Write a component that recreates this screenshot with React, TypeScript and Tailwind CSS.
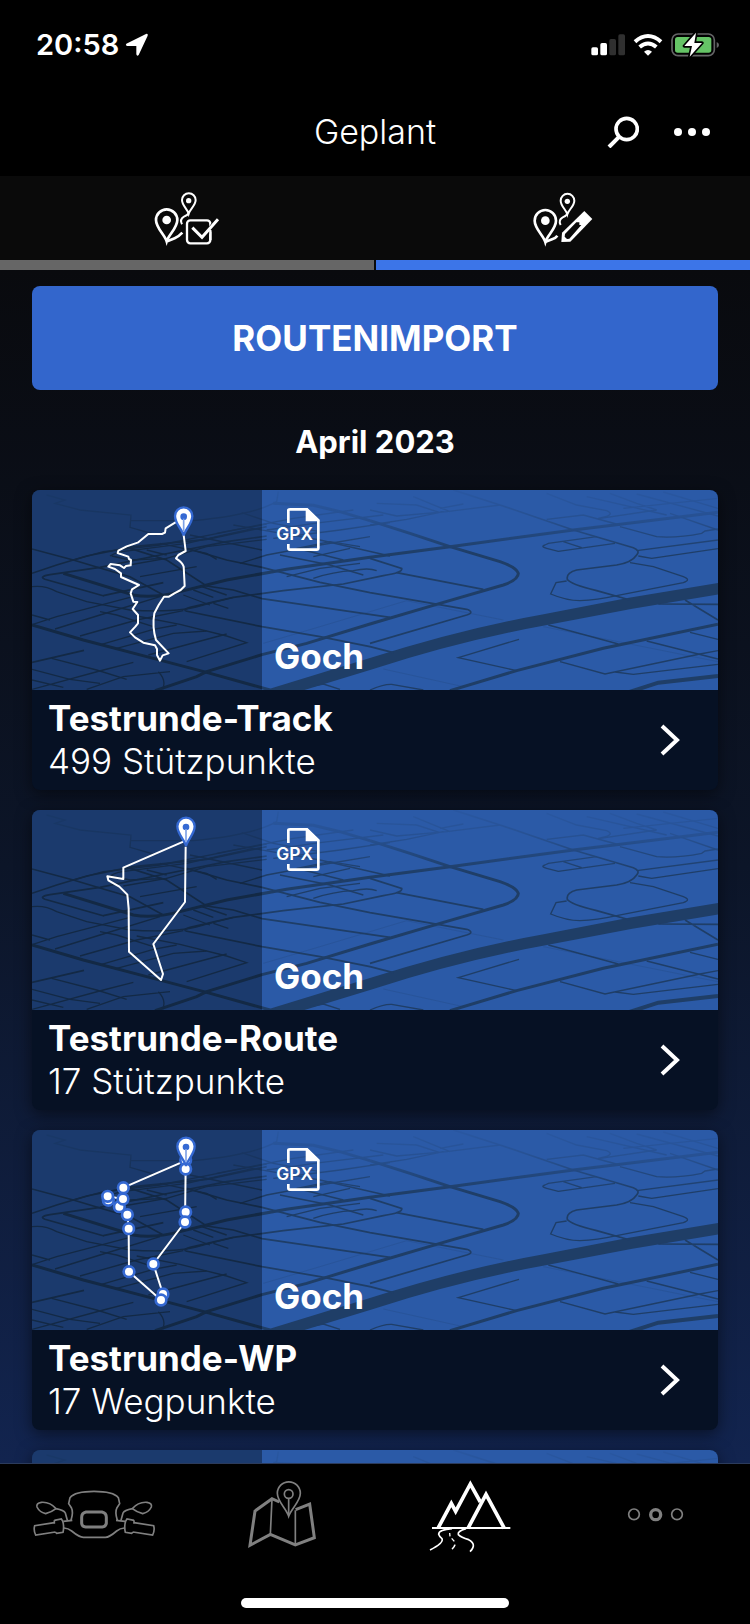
import React from "react";

const routes = [
  { kind: "track", place: "Goch", name: "Testrunde-Track", points: "499 Stützpunkte" },
  { kind: "route", place: "Goch", name: "Testrunde-Route", points: "17 Stützpunkte" },
  { kind: "waypoints", place: "Goch", name: "Testrunde-WP", points: "17 Wegpunkte" },
  { kind: "none", place: "", name: "", points: "" },
];

const trackPath =
  "M470 125 L437 145 L435 158 L426 162 L385 162 L355 187 L320 199 L295 212 L293 219 L325 230 L327 237 L333 240 L332 256 L318 258 L312 264 L300 256 L272 252 L265 260 L285 267 L303 280 L303 291 L357 315 L336 328 L332 340 L340 365 L352 366 L338 387 L354 405 L354 430 L346 440 L330 457 L345 472 L370 488 L405 496 L411 507 L411 525 L420 542 L428 526 L446 520 L408 480 Q396 440 403 400 L416 375 L432 350 L447 350 L463 340 L482 330 L494 318 L491 260 Q487 247 468 235 L475 225 L497 213 L491 165";

const routePath =
  "M490 125 L310 203 L310 237 L262 229 L265 241 L298 260 L322 284 L326 326 L327 455 L423 540 L429 522 L400 432 L495 306 L497 140";

const waypoints = [
  [497, 120], [497, 147], [310, 203], [265, 241], [263, 229], [298, 260], [309, 237], [322, 284],
  [326, 326], [327, 455], [429, 522], [423, 540], [400, 432], [497, 276], [495, 306],
];

function Pin({ x, y }: { x: number; y: number }) {
  return (
    <g transform={`translate(${x} ${y})`}>
      <path d="M0 57 C-3 40 -26 22 -26 -2 A26 26 0 0 1 26 -2 C26 22 3 40 0 57Z" fill="#fff" stroke="#3569d3" strokeWidth="7" />
      <circle r="10" fill="#3569d3" />
      <path d="M0 6V45" stroke="#7fa2e6" strokeWidth="5" />
    </g>
  );
}

function MapDrawing({ kind }: { kind: string }) {
  return (
    <svg className="absolute inset-0 h-full w-full" viewBox="36 30 2058 600" preserveAspectRatio="xMinYMin slice" aria-hidden="true">
      <defs>
        <linearGradient id={`fade-${kind}`} x1="0" y1="30" x2="0" y2="220" gradientUnits="userSpaceOnUse">
          <stop offset="0" stopColor="#fff" stopOpacity="0.08" />
          <stop offset="0.4" stopColor="#fff" stopOpacity="0.3" />
          <stop offset="1" stopColor="#fff" />
        </linearGradient>
        <mask id={`mask-${kind}`} maskUnits="userSpaceOnUse" x="0" y="0" width="2200" height="700">
          <rect width="2200" height="700" fill={`url(#fade-${kind})`} />
        </mask>
      </defs>
      <rect x="36" y="30" width="2058" height="600" fill="#2b5aa7" />
      <g mask={`url(#mask-${kind})`} fill="none" stroke="#1f3e67">
        {/* main roads */}
        <g strokeWidth="9">
          <path d="M36 435 L190 480 L400 535 L560 577 L750 630" />
          <path d="M405 632 L530 590 L560 575 L726 524 L860 490 L1050 432 L1260 370 L1450 315 Q1495 300 1495 280 Q1490 262 1440 245 L1290 200 L1170 160 L1050 122" />
          <path d="M130 280 L340 345 Q400 356 480 335 L620 300 L800 268 L1050 232 L1290 200 L1660 150 L2094 97" />
          <path d="M1050 122 L960 95 L880 76 L760 70" />
          <path d="M1290 632 L1490 572 L1750 505 L2094 433" />
        </g>
        <path strokeWidth="34" d="M730 650 L1050 552 Q1320 465 1570 420 L1830 370 L2100 325" />
        <path strokeWidth="12" d="M1825 637 L1915 608 L2094 588" />
        {/* side roads */}
        <g strokeWidth="5">
          <path d="M36 207 L160 240 L260 270 L330 290 L430 345" />
          <path d="M252 348 L75 298 Q55 290 90 284 L240 262 L420 225 L620 185 L740 168" />
          <path d="M36 280 L110 255 L200 228 L340 200 L560 178 L740 140" />
          <path d="M250 347 L430 308" />
          <path d="M330 205 L440 240 L560 318 L640 330 L726 356 L1110 412" />
          <path d="M500 205 L620 240 L726 262 L900 307 L1050 338 L1340 388 Q1365 397 1340 405 L1050 490" />
          <path d="M497 393 Q490 388 510 382 L640 352 L790 332 L970 312 L1090 287 Q1150 278 1145 265 L1050 235" />
          <path d="M497 393 L726 440 L900 470 L1050 500 L1120 518" />
          <path d="M1130 278 L1390 328" />
          <path d="M1300 30 L1440 75 L1660 150 L1840 203 Q1862 212 1850 225 Q1835 248 1790 255 L1670 270 Q1638 278 1642 298 Q1650 312 1730 332 L1830 360" />
          <path d="M1915 372 L2094 373 M1995 360 L2094 420" />
          <path d="M36 547 L192 511" />
        </g>
        {/* small streets */}
        <g strokeWidth="4">
          <path d="M80 45 L135 60 L105 70 L180 90 L333 105 L330 142 L410 165 M333 122 L520 122 Q700 105 770 65 L775 35" />
          <path d="M160 240 L250 215 L420 195 L620 155 L740 132" />
          <path d="M36 320 Q75 315 110 335 L200 365 L330 390 Q480 400 560 372 L640 352" />
          <path d="M36 405 L90 420 M36 434 L110 410 L330 352 M105 447 L240 405 L420 350 M180 468 L350 420 L490 392" />
          <path d="M240 395 L290 405 L400 440" />
          <path d="M245 493 L400 448 L470 435 M290 505 L460 460 L560 453 M385 525 L620 462" />
          <path d="M350 408 L480 433 L620 468 L680 488 L500 545" />
          <path d="M36 568 L150 598 L240 610 M95 535 L230 570 L320 598" />
          <path d="M36 628 L250 570 L340 547 M200 628 L310 590 L450 575 M415 575 Q440 600 428 628 M36 600 L130 622" />
          <path d="M270 228 Q290 215 330 212 L500 190 L700 145 M275 228 L330 240 L440 235 L560 200 L740 178" />
          <path d="M310 258 L440 235 M360 290 L530 260 M380 210 L440 225" />
          <path d="M420 190 L560 220 L590 238 M510 165 L726 210" />
          <path d="M640 135 L900 180 L1110 228 M665 98 L760 130 L900 155" />
          <path d="M540 318 L620 345 M520 330 L580 352 M490 345 L570 375 M580 370 L625 385" />
          <path d="M660 250 L740 225 L900 195 L1050 170 M590 160 L820 115 L1000 90" />
          <path d="M740 150 L900 128 L1090 105 M760 175 L960 150 L1110 128" />
          <path d="M780 225 L930 255 L1030 285 M850 210 L970 240" />
          <path d="M880 295 Q940 275 1000 272 Q1045 262 1070 272 M800 290 L900 265 L1020 250" />
          <path d="M830 205 L930 185 L1020 200 M880 230 L990 205" />
          <path d="M870 620 L910 612 L960 628 M1050 630 Q1090 612 1115 613 L1210 630" />
          <path d="M1050 90 L1130 108 L1280 95 L1440 75 M1180 50 L1290 95 M1070 70 L1190 75 L1260 98 M1260 85 L1330 72 M1050 135 L1160 118 L1270 95" />
          <path d="M1575 195 L1585 190 L1730 170 M1575 195 Q1560 200 1580 205 L1615 214 L1785 190 M1630 185 L1685 203" />
          <path d="M1640 303 L1608 308 L1592 342 Q1640 362 1680 362 Q1730 360 1790 347 L1990 308 Q2015 300 1990 290 L1900 260 L1830 248" />
          <path d="M1850 212 L2094 180 M1855 228 L1895 235 L2094 206 M1800 140 L1910 170 Q1970 175 2045 160 L2055 153 L2094 147" />
          <path d="M1580 118 L1690 105 L1800 135 M1735 115 Q1790 105 1760 92 L1670 75 L1580 40 M1740 115 L1910 90 L1850 70 L1770 40 M1810 85 L2094 55" />
          <path d="M1850 42 L2094 108 M1930 36 L2094 85 M1950 100 L2094 150 M1700 50 L1940 105" />
          <path d="M1585 435 L1795 492 M1880 483 L2094 537 M2010 457 L2094 478" />
          <path d="M1497 478 L1315 533 L1490 572 M1620 545 L1755 582 L2040 522 L2094 512 M1785 576 L1840 583 L2094 553" />
        </g>
        <path strokeWidth="1" strokeOpacity="0.6" d="M730 490 L900 440 L1160 362 L1450 420 M1090 567 L1330 620 M1570 440 L2094 545" />
      </g>
      <rect x="36" y="30" width="690" height="600" fill="#00050c" fillOpacity="0.37" />
      {kind === "track" && (
        <>
          <path d={trackPath} fill="none" stroke="#fff" strokeWidth="6" strokeLinejoin="round" />
          <Pin x={491} y={110} />
        </>
      )}
      {(kind === "route" || kind === "waypoints") && (
        <path d={routePath} fill="none" stroke="#fff" strokeWidth="6" strokeLinejoin="round" />
      )}
      {kind === "waypoints" &&
        waypoints.map(([x, y]) => (
          <circle key={`${x}-${y}`} cx={x} cy={y} r="16" fill="#fff" stroke="#3569d3" strokeWidth="8" />
        ))}
      {(kind === "route" || kind === "waypoints") && <Pin x={498} y={81} />}
    </svg>
  );
}

function GpxIcon() {
  return (
    <svg className="h-11 w-12" viewBox="762 86 144 132">
      <path d="M805 131 V93 Q805 90 810 90 H861 L895 123 V206 Q895 211 890 211 H810 Q805 211 805 206 V194" fill="none" stroke="#fff" strokeWidth="8" />
      <path d="M857 87 H861 L898 122 V126 H857Z" fill="#fff" />
      <text x="769" y="181" fill="#fff" className="font-semibold" fontSize="52">GPX</text>
    </svg>
  );
}

function RouteCard({ route }: { route: (typeof routes)[number] }) {
  return (
    <li className="shrink-0 overflow-hidden rounded-lg bg-[#061124] shadow-[0_4px_16px_rgba(0,0,0,0.5)]">
      <div className="relative h-[200px]">
        <MapDrawing kind={route.kind} />
        {route.name && (
          <div className="relative ml-[230px] flex h-full flex-col justify-between pt-[18px] pb-3 pl-3">
            <GpxIcon />
            <p className="text-[35px] leading-[43px] font-bold">{route.place}</p>
          </div>
        )}
      </div>
      {route.name && (
        <a href="#" className="flex h-[100px] items-center justify-between pr-[38px] pl-4">
          <div>
            <h3 className="text-[35px] leading-[43px] font-bold">{route.name}</h3>
            <p className="text-[35px] leading-[43px] font-light">{route.points}</p>
          </div>
          <svg className="h-8 w-5" viewBox="0 0 20 32" fill="none" stroke="#fff" strokeWidth="4">
            <path d="M2 2 L17 16 L2 30" />
          </svg>
        </a>
      )}
    </li>
  );
}

function StatusBar() {
  return (
    <div className="flex h-[90px] shrink-0 items-center justify-between pr-[30px] pl-9">
      <div className="flex items-center gap-[6px]">
        <span className="text-[29px] leading-9 font-semibold">20:58</span>
        <svg className="h-6 w-6" viewBox="315 42 72 72" fill="#fff">
          <path d="M319 74 L378 45 Q385 43 383 50 L356 108 Q351 113 349 106 V81 H321 Q315 78 319 74Z" />
        </svg>
      </div>
      <svg className="h-7 w-[130px]" viewBox="60 33 390 84">
        <g fill="#fff">
          <rect x="64" y="82" width="20" height="24" rx="5" />
          <rect x="91" y="69" width="20" height="37" rx="5" />
          <rect x="118" y="57" width="20" height="49" rx="5" fill="#303030" />
          <rect x="145" y="43" width="20" height="63" rx="5" fill="#303030" />
        </g>
        <g fill="none" stroke="#fff" strokeWidth="12">
          <path d="M195 65 Q234 31 273 65" />
          <path d="M209 81 Q234 60 259 81" />
        </g>
        <path d="M222 95 Q234 85 246 95 L234 107Z" fill="#fff" />
        <rect x="306" y="42" width="127" height="65" rx="18" fill="none" stroke="#646466" strokeWidth="5" />
        <path d="M440 66 Q447 69 447 75 Q447 81 440 84Z" fill="#646466" />
        <rect x="315" y="51" width="109" height="47" rx="8" fill="#65c466" />
        <path d="M378 38 L343 78 H366 L359 110 L396 69 H373Z" fill="#fff" stroke="#000" strokeWidth="10" strokeLinejoin="round" paintOrder="stroke" />
      </svg>
    </div>
  );
}

function MapPins() {
  return (
    <g fill="none" stroke="#fff">
      <path strokeWidth="8" d="M110 212 C104 192 78 172 78 148 A32 32 0 0 1 142 148 C142 172 116 192 110 212Z" />
      <path strokeWidth="6" d="M176 129 C172 115 156 104 156 88 A20 20 0 0 1 197 88 C197 104 180 115 176 129Z" />
      <circle cx="110" cy="148" r="13" fill="#fff" stroke="none" />
      <circle cx="176" cy="90" r="8" fill="#fff" stroke="none" />
      <path strokeWidth="6" d="M176 128 Q172 134 162 138 Q148 146 156 161" />
    </g>
  );
}

function Tabs() {
  return (
    <div role="tablist" className="grid shrink-0 grid-cols-2 gap-[2px] bg-[#0a0a0a]">
      <button role="tab" aria-selected="false" aria-label="Gefahren" className="flex flex-col items-center border-b-10 border-[#666]">
        <svg className="h-[84px] w-20" viewBox="51 16 240 252">
          <MapPins />
          <g fill="none" stroke="#fff">
            <path strokeWidth="8" d="M112 212 L134 203 Q146 198 157 186" />
            <rect x="171" y="149" width="70" height="69" rx="10" strokeWidth="7" />
            <path strokeWidth="15" stroke="#0a0a0a" d="M223 197 L264 146" />
            <path strokeWidth="9" d="M187 171 L216 200 L264 146" />
            <path strokeWidth="7" d="M241 178 V208" />
          </g>
        </svg>
      </button>
      <button role="tab" aria-selected="true" aria-label="Geplant" className="flex flex-col items-center border-b-10 border-[#3c75e8]">
        <svg className="h-[84px] w-20" viewBox="1179 17 240 252">
          <g transform="translate(1136 3)">
            <MapPins />
          </g>
          <path d="M1247 214 L1268 206 Q1277 203 1282 196" fill="none" stroke="#fff" strokeWidth="8" />
          <path d="M1294 215 L1296 187 L1363 122 L1387 146 L1321 214Z" fill="#fff" />
          <path d="M1305 191 L1339 156 H1348 V164 H1354 L1318 205 L1311 206 L1304 199Z" fill="#0a0a0a" />
        </svg>
      </button>
    </div>
  );
}

function BottomNav() {
  return (
    <nav className="shrink-0 border-t border-[#2b3b5c] bg-black pt-3 pb-4">
      <div className="grid grid-cols-4 justify-items-center">
        <button aria-label="Fahrzeug">
          <svg className="h-20 w-[125px]" viewBox="93 107 375 240" fill="none" stroke="#808080" strokeWidth="5">
            <path d="M213 240 Q221 215 214 202 L206 190 L210 172 Q225 153 282 153 Q340 153 355 172 L359 190 L351 202 Q344 215 352 240" />
            <path d="M190 243 L217 240 M348 240 L375 243" />
            <path d="M192 263 Q205 264 215 272 Q238 291 250 291 H316 Q328 291 350 272 Q360 264 373 263" />
            <path d="M168 205 Q150 184 124 186 Q108 188 111 200 Q118 215 137 220 Q157 214 168 205 Q192 210 196 218 L202 240" />
            <path d="M397 205 Q415 184 441 186 Q457 188 454 200 Q447 215 428 220 Q408 214 397 205 Q373 210 369 218 L363 240" />
            <path d="M163 247 L104 256 Q100 270 107 284 L166 275 M163 240 L184 236 L188 242 Q193 258 189 276 L170 279 L166 275 M163 240 V250" />
            <path d="M402 247 L461 256 Q465 270 458 284 L399 275 M402 240 L381 236 L377 242 Q372 258 376 276 L395 279 L399 275 M402 240 V250" />
            <path d="M258 215 H306 Q319 218 319 231 V249 Q317 259 307 260 H257 Q246 259 245 249 V231 Q245 218 258 215Z" strokeWidth="9" />
          </svg>
        </button>
        <button aria-label="Karte">
          <svg className="h-20 w-[125px]" viewBox="657 107 375 240" fill="none" stroke="#808080">
            <path strokeWidth="9" d="M838 185 L816 175 L765 212 L750 315 L811 282 L886 314 L943 292 L929 191 L887 208" />
            <path strokeWidth="5" d="M816 175 L811 282 M886 210 V314" />
            <path strokeWidth="5" fill="#000" d="M866 228 C858 203 832 184 832 159 A34 34 0 0 1 901 159 C901 184 875 203 866 228Z" />
            <circle cx="866" cy="161" r="13" strokeWidth="5" />
            <path strokeWidth="5" d="M866 174 V222" />
          </svg>
        </button>
        <button aria-label="Routen">
          <svg className="h-20 w-[125px]" viewBox="92 107 375 240" fill="none" stroke="#fff">
            <path strokeWidth="11" d="M189 262 L228 189 L241 213 L285 131 L315 185" />
            <path strokeWidth="11" d="M278 264 L332 162 L387 264" />
            <path strokeWidth="6" d="M170 263 H405" />
            <path strokeWidth="5" d="M230 265 Q190 268 190 282 Q192 289 200 295 Q206 308 164 329 M272 265 Q245 273 249 283 Q257 291 280 298 Q306 312 284 334" />
            <path strokeWidth="4" d="M223 278 L224 288 M229 294 L237 303" />
            <path strokeWidth="5" d="M239 313 Q237 321 230 326" />
          </svg>
        </button>
        <button aria-label="Mehr">
          <svg className="h-20 w-[125px]" viewBox="657 107 375 240" fill="none" stroke="#808080">
            <circle cx="777" cy="222" r="16" strokeWidth="5" />
            <circle cx="842" cy="223" r="15" strokeWidth="10" />
            <circle cx="906" cy="222" r="16" strokeWidth="5" />
          </svg>
        </button>
      </div>
      <div className="mx-auto mt-[42px] h-[10px] w-[268px] rounded-full bg-white" />
    </nav>
  );
}

export default function App() {
  return (
    <div className="flex h-screen flex-col bg-black font-['Inter',sans-serif] text-white">
      <StatusBar />
      <header className="grid h-[86px] shrink-0 grid-cols-[1fr_auto_1fr] items-center px-10 pb-[2px]">
        <h1 className="col-start-2 text-[34px] leading-10 font-light">Geplant</h1>
        <div className="flex items-center justify-end gap-[35px]">
          <button aria-label="Suchen">
            <svg className="h-8 w-8" viewBox="112 286 96 96" fill="none" stroke="#fff">
              <circle cx="171" cy="325" r="32" strokeWidth="11" />
              <path d="M149 348 L118 379" strokeWidth="12" />
            </svg>
          </button>
          <button aria-label="Mehr Optionen">
            <svg className="h-3 w-9" viewBox="312 318 108 36" fill="#fff">
              <circle cx="324" cy="336" r="12" />
              <circle cx="366" cy="336" r="12" />
              <circle cx="408" cy="336" r="12" />
            </svg>
          </button>
        </div>
      </header>
      <Tabs />
      <main className="flex min-h-0 flex-1 flex-col overflow-y-auto bg-linear-to-b from-[#090a0e] via-[#0c1528] to-[#12244f] px-8 pt-4 [scrollbar-width:none]">
        <button className="h-[104px] shrink-0 rounded-lg bg-[#3366cc] text-[35px] leading-[43px] font-bold">ROUTENIMPORT</button>
        <h2 className="flex h-[100px] shrink-0 items-center justify-center pt-1 text-[31px] leading-10 font-bold">April 2023</h2>
        <ul className="flex flex-col gap-5">
          {routes.map((route) => (
            <RouteCard key={route.kind} route={route} />
          ))}
        </ul>
      </main>
      <BottomNav />
    </div>
  );
}
